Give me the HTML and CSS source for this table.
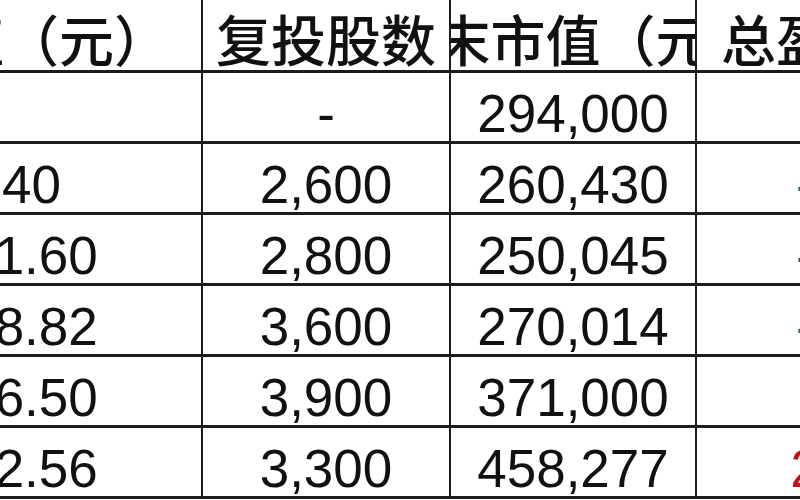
FILE: index.html
```html
<!DOCTYPE html>
<html lang="zh-CN">
<head>
<meta charset="utf-8">
<title>复投收益表</title>
<link rel="stylesheet" href="styles.css">
</head>
<body>
<div class="sheet">
  <div class="cell head first">净值（元）</div>
  <div class="cell head">复投股数</div>
  <div class="cell head">期末市值（元）</div>
  <div class="cell head">总盈亏（元）</div>

  <div class="cell num first"></div>
  <div class="cell num">-</div>
  <div class="cell num">294,000</div>
  <div class="cell num"></div>

  <div class="cell num first">40</div>
  <div class="cell num">2,600</div>
  <div class="cell num">260,430</div>
  <div class="cell num loss">-33,570</div>

  <div class="cell num first">31.60</div>
  <div class="cell num">2,800</div>
  <div class="cell num">250,045</div>
  <div class="cell num loss">-43,955</div>

  <div class="cell num first">28.82</div>
  <div class="cell num">3,600</div>
  <div class="cell num">270,014</div>
  <div class="cell num loss">-23,986</div>

  <div class="cell num first">26.50</div>
  <div class="cell num">3,900</div>
  <div class="cell num">371,000</div>
  <div class="cell num gain">77,000</div>

  <div class="cell num first">32.56</div>
  <div class="cell num">3,300</div>
  <div class="cell num">458,277</div>
  <div class="cell num gain">204,277</div>
</div>
</body>
</html>
```

FILE: styles.css
```css
html, body {
  margin: 0;
  padding: 0;
  overflow: hidden;
  background: #ffffff;
}

.sheet {
  display: grid;
  grid-template-columns: 347px 246px 244px 378px;
  grid-template-rows: 70px repeat(6, 68px);
  column-gap: 2px;
  row-gap: 3px;
  padding-bottom: 3px;
  margin-left: -146px;
  width: max-content;
  background: #1c1c1c;
}

.cell {
  background: #ffffff;
  display: flex;
  justify-content: center;
  overflow: hidden;
  white-space: nowrap;
  color: #111111;
  box-sizing: border-box;
}

.head {
  align-items: center;
  font-family: "Noto Sans CJK SC", "Noto Sans", sans-serif;
  font-weight: 500;
  font-size: 55px;
  line-height: 55px;
  padding-top: 4px;
}

.num {
  align-items: flex-end;
  font-family: "Liberation Sans", Arial, sans-serif;
  font-size: 53px;
  line-height: 53px;
  padding-bottom: 1px;
}

.num.first {
  padding-left: 8px;
}

.head.first {
  padding-left: 8px;
}

.loss {
  color: #1e7a3c;
}

.gain {
  color: #c0141c;
}
```
